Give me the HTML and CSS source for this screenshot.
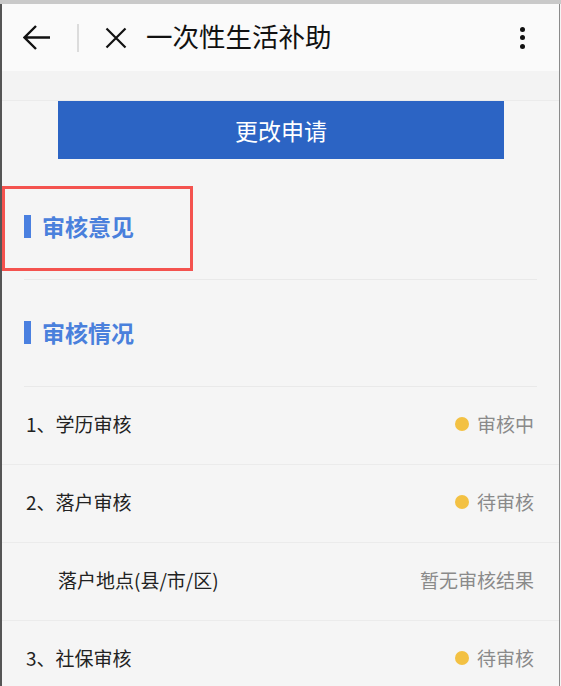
FILE: index.html
```html
<!DOCTYPE html>
<html lang="zh-CN">
<head>
    <meta charset="UTF-8">
    <meta name="viewport" content="width=device-width, initial-scale=1.0">
    <title>一次性生活补助</title>
    <link rel="stylesheet" href="styles.css">
</head>
<body>
    <div class="topstrip"></div>
    <div class="frame">
        <div class="header">
            <svg class="icon-back" width="27" height="27" viewBox="0 0 27 27">
                <path d="M27 13.5 H1.5 M13 2 L1.5 13.5 L13 25" fill="none" stroke="#111" stroke-width="2.4"/>
            </svg>
            <span class="header-sep"></span>
            <svg class="icon-close" width="22" height="22" viewBox="0 0 22 22">
                <path d="M1.5 1.5 L20.5 20.5 M20.5 1.5 L1.5 20.5" fill="none" stroke="#111" stroke-width="2.2"/>
            </svg>
            <span class="title">一次性生活补助</span>
            <span class="kebab"><i></i><i></i><i></i></span>
        </div>
        <div class="subbar"></div>

        <button class="btn-change">更改申请</button>

        <div class="highlight">
            <h3 class="section-title">审核意见</h3>
        </div>
        <div class="divider"></div>

        <div class="section-head">
            <h3 class="section-title">审核情况</h3>
        </div>
        <div class="divider"></div>

        <div class="row">
            <span class="label">1、学历审核</span>
            <span class="status"><i class="dot"></i>审核中</span>
        </div>
        <div class="row">
            <span class="label">2、落户审核</span>
            <span class="status"><i class="dot"></i>待审核</span>
        </div>
        <div class="row sub">
            <span class="label">落户地点(县/市/区)</span>
            <span class="status">暂无审核结果</span>
        </div>
        <div class="row">
            <span class="label">3、社保审核</span>
            <span class="status"><i class="dot"></i>待审核</span>
        </div>
    </div>
</body>
</html>
```

FILE: styles.css
```css
body {
    margin: 0;
    height: 686px;
    overflow: hidden;
    background: #f5f5f5;
    font-family: "Noto Sans CJK SC", "Noto Sans", sans-serif;
    color: #222;
}
.topstrip {
    height: 4px;
    background: #c9c9c9;
}
.frame {
    width: 557px;
    min-height: 682px;
    border-left: 2px solid #555;
    border-right: 1px solid #8a8a8a;
    background: #f5f5f5;
}
.header {
    height: 67px;
    display: flex;
    align-items: center;
    padding: 0 34px 0 21px;
    background: #fafafa;
}
.header-sep {
    width: 2px;
    height: 28px;
    background: #dcdcdc;
    margin: 0 26px 0 27px;
}
.icon-back, .icon-close {
    display: block;
}
.title {
    margin-left: 19px;
    padding-bottom: 2px;
    font-size: 26.5px;
    color: #111;
    line-height: 1;
}
.kebab {
    margin-left: auto;
    display: flex;
    flex-direction: column;
    gap: 3.5px;
}
.kebab i {
    display: block;
    width: 5px;
    height: 5px;
    border-radius: 50%;
    background: #111;
}
.subbar {
    height: 29px;
    background: #f3f3f3;
    border-bottom: 1px solid #ebebeb;
}
.btn-change {
    display: block;
    width: 446px;
    height: 58px;
    margin: 0 0 0 56px;
    border: none;
    background: #2c64c4;
    color: #fff;
    font-family: inherit;
    font-size: 23px;
}
.highlight {
    box-sizing: border-box;
    width: 191px;
    height: 85px;
    margin-top: 27px;
    border: 3px solid #f4534f;
    display: flex;
    align-items: center;
    padding: 0 0 4px 19px;
}
.section-head {
    height: 106px;
    display: flex;
    align-items: center;
    padding: 0 0 2px 22px;
    box-sizing: border-box;
}
.section-title {
    margin: 0;
    display: flex;
    align-items: center;
    gap: 11px;
    font-size: 23px;
    font-weight: bold;
    color: #4a80dc;
    line-height: 1;
}
.section-title::before {
    content: "";
    width: 7px;
    height: 23px;
    background: #4a80e0;
}
.divider {
    height: 1px;
    margin: 8px 22px 0 22px;
    background: #e9e9e9;
}
.section-head + .divider {
    margin-top: 0;
}
.row {
    height: 77px;
    display: flex;
    align-items: center;
    justify-content: space-between;
    padding: 0 25px 4px 24px;
    box-sizing: border-box;
    height: 78px;
    border-bottom: 1px solid #ebebeb;
    font-size: 19px;
}
.row.sub {
    padding-left: 56px;
}
.label {
    color: #222;
}
.status {
    display: flex;
    align-items: center;
    color: #8a8a8a;
}
.dot {
    width: 14px;
    height: 14px;
    border-radius: 50%;
    background: #f3c143;
    margin-right: 8px;
}
```
